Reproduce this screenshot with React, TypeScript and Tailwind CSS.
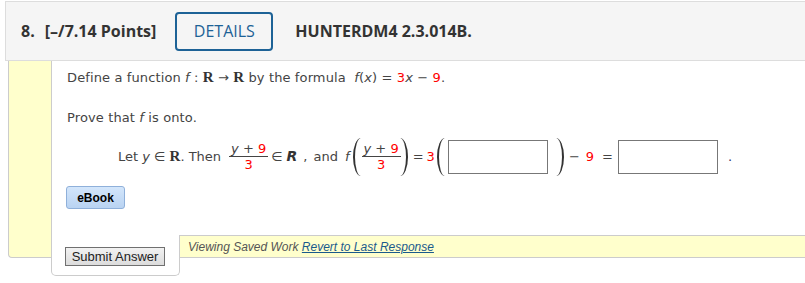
import React from 'react';

const red = 'text-[#ff0000]';
const serifR = "font-['Liberation_Serif',serif] text-[15px] text-[#333]";

function Frac({ className = '' }: { className?: string }) {
  return (
    <span className={`inline-flex flex-col items-center ${className}`}>
      <span className="leading-[15px] px-[2px]">
        <i className="text-[#444]">y</i> + <span className={red}>9</span>
      </span>
      <span className="h-[1px] w-full bg-[#444]" />
      <span className={`leading-[15px] ${red}`}>3</span>
    </span>
  );
}

// stretched math delimiter drawn as a curved border
function Paren({ side, className = '' }: { side: 'l' | 'r'; className?: string }) {
  return side === 'l' ? (
    <span className={`inline-block w-[8px] h-[38px] border-l-2 border-[#333] rounded-l-[100%_50%] ${className}`} />
  ) : (
    <span className={`inline-block w-[8px] h-[38px] border-r-2 border-[#333] rounded-r-[100%_50%] ${className}`} />
  );
}

function Box({ className = '' }: { className?: string }) {
  return <span className={`inline-block w-[100px] h-[34px] border border-[#777] bg-white ${className}`} />;
}

export default function App() {
  return (
    <div className="w-[805px] h-[283px] overflow-hidden bg-white pt-[1px]">
      {/* question header */}
      <div className="ml-[5px] h-[60px] border border-r-0 border-[#ddd] bg-[#f5f5f5] flex items-center font-['Open_Sans',sans-serif] text-[16px] text-[#333]">
        <span className="ml-[15px] font-bold">8.</span>
        <span className="ml-[10px] font-bold">[–/7.14 Points]</span>
        <button className="ml-[19px] w-[98px] h-[39px] border-2 border-[#1d6296] rounded-[4px] text-[#1d6296] text-[16px]">
          DETAILS
        </button>
        <span className="ml-[22px] font-bold">HUNTERDM4 2.3.014B.</span>
      </div>

      <div className="flex items-start ml-[8px]">
        <div className="w-[43px] h-[197px] bg-[#ffffcc] border-l border-b border-[#ccc] rounded-bl-[4px]" />

        <div className="flex-1 flex flex-col">
          <div className="h-[174px] border-l border-[#ccc] pl-[15px] pt-[8px] font-['DejaVu_Sans',sans-serif] text-[13px] text-[#444]">
            <p className="leading-[16px] tracking-[0.12px]">
              Define a function <i>f</i> : <b className={serifR}>R</b> → <b className={serifR}>R</b> by the formula&nbsp; <i>f</i>(<i>x</i>) = <span className={red}>3</span><i>x</i> − <span className={red}>9</span>.
            </p>
            <p className="mt-[24px] leading-[16px] tracking-[0.12px]">
              Prove that <i>f</i> is onto.
            </p>

            <div className="mt-[11px] ml-[51px] h-[39px] flex items-center whitespace-pre">
              <span>Let <i>y</i> ∈ <b className={serifR}>R</b>. Then</span>
              <Frac className="ml-[8px]" />
              <span className="ml-[3px]">∈</span>
              <b className="ml-[4px] italic text-[14px] text-[#333]">R</b>
              <span className="ml-[6px]">,</span>
              <span className="ml-[6px]">and</span>
              <i className="ml-[7px]">f</i>
              <Paren side="l" className="ml-[3px]" />
              <Frac className="ml-[1px]" />
              <Paren side="r" className="ml-[-1px]" />
              <span className="ml-[5px]">=</span>
              <span className={`ml-[3px] ${red}`}>3</span>
              <Paren side="l" className="ml-[2px]" />
              <Box className="ml-[3px]" />
              <Paren side="r" className="ml-[8px]" />
              <span className="ml-[5px]">−</span>
              <span className={`ml-[6px] ${red}`}>9</span>
              <span className="ml-[8px]">=</span>
              <Box className="ml-[5px]" />
              <span className="ml-[10px] text-[#336]">.</span>
            </div>

            <button className="block mt-[10px] ml-[-1px] w-[59px] h-[23px] rounded-[3px] border border-[#8fb0da] bg-gradient-to-b from-[#d3e6fb] to-[#b9d3f2] font-['Liberation_Sans',sans-serif] text-[12px] font-bold text-black">
              eBook
            </button>
          </div>

          <div className="flex items-start">
            <div className="w-[129px] h-[41px] border-l border-r border-b border-[#ccc] rounded-b-[5px] pl-[13px] pt-[12px]">
              <button className="block w-[100px] h-[19px] border border-[#707070] bg-gradient-to-b from-[#f2f2f2] to-[#dcdcdc] font-['Liberation_Sans',sans-serif] text-[13px] leading-[17px] text-[#222]">
                Submit Answer
              </button>
            </div>
            <div className="flex-1 h-[23px] bg-[#ffffcc] border-t border-b border-[#ccc] pl-[8px] flex items-center font-['Liberation_Sans',sans-serif] text-[12px] italic text-[#555]">
              Viewing Saved Work&nbsp;
              <a href="#" className="text-[#1a5a8c] underline">Revert to Last Response</a>
            </div>
          </div>
        </div>
      </div>
    </div>
  );
}
